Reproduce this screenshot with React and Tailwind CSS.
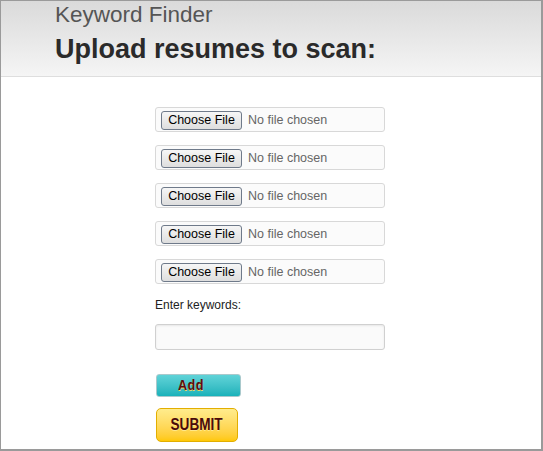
export default function App() {
  const rows = [0, 1, 2, 3, 4];
  return (
    <div className="w-[543px] h-[451px] box-border border border-[#9a9a9a] border-b-2 border-r-2 bg-white overflow-hidden" style={{ fontFamily: '"Liberation Sans", Arial, sans-serif' }}>
      <div className="h-[76px] border-b border-[#dedede] bg-gradient-to-b from-[#dadada] to-[#f5f5f5] pl-[54px]">
        <div className="text-[22.5px] leading-[26px] text-[#555] pt-[1px]">Keyword Finder</div>
        <div className="text-[27px] leading-[30px] font-bold text-[#2a2a2a] mt-[6px]">Upload resumes to scan:</div>
      </div>
      <div className="pl-[154px] pt-[30px] flex flex-col">
        {rows.map((i) => (
          <div key={i} className="w-[230px] h-[25px] mb-[13px] box-border border border-[#d8d8d8] rounded-[3px] bg-[#fbfbfb] flex items-center pl-[5px] pt-[1px]">
            <span className="h-[19px] w-[81px] box-border border border-[#6f7a8a] rounded-[3px] bg-gradient-to-b from-[#f6f6f6] to-[#dedede] text-[12.5px] text-black flex items-center justify-center leading-none pt-[1px]">Choose File</span>
            <span className="ml-[6px] text-[12.5px] text-[#666] leading-none pt-[1px]">No file chosen</span>
          </div>
        ))}
        <div className="text-[12px] text-[#222] mt-[1px] leading-[14px]">Enter keywords:</div>
        <div className="w-[230px] h-[26px] mt-[12px] box-border border border-[#d0d0d0] rounded-[3px] bg-[#fafafa] shadow-[inset_0_1px_2px_rgba(0,0,0,0.08)]"></div>
        <div className="ml-[1px] mt-[24px] w-[85px] h-[23px] box-border border border-[#a9c9cc] rounded-[3px] bg-gradient-to-b from-[#5fd3d8] to-[#16b2ba] flex items-center pl-[21px] text-[14px] font-bold text-[#5a0a12]" style={{ textShadow: '0 1px 0 #f3d35a' }}>
          <span className="inline-block scale-x-90 origin-left tracking-[0.5px]">Add</span>
        </div>
        <div className="ml-[1px] mt-[11px] w-[82px] h-[34px] box-border border border-[#e2ae00] rounded-[5px] bg-gradient-to-b from-[#ffec8c] to-[#ffc800] flex items-center justify-center text-[17px] font-bold text-[#4a0a0a]" style={{ textShadow: '0 1px 0 #ffe88a' }}>
          <span className="inline-block scale-x-[0.8]">SUBMIT</span>
        </div>
      </div>
    </div>
  );
}
